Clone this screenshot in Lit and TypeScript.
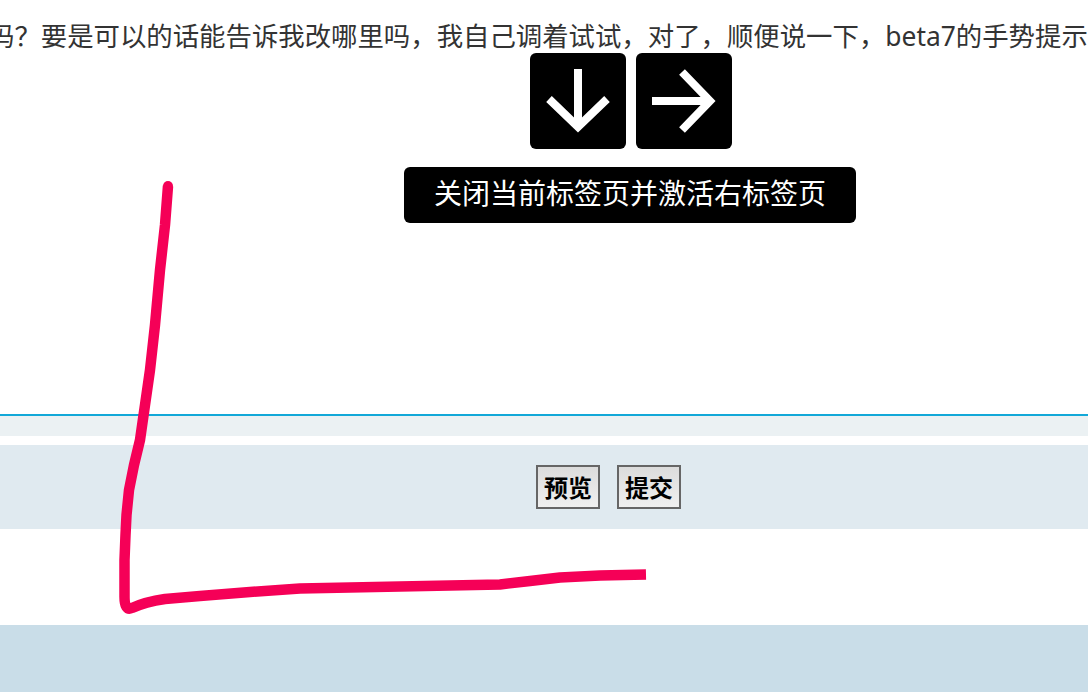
import { LitElement, html, css } from "lit";
import { customElement } from "lit/decorators.js";

@customElement("app-root")
export class AppRoot extends LitElement {
  static styles = css`
    :host {
      display: block;
      position: relative;
      width: 1088px;
      height: 692px;
      overflow: hidden;
      background: #fff;
      font-family: "Noto Sans", "Noto Sans CJK SC", sans-serif;
    }
    .page {
      display: flex;
      flex-direction: column;
      height: 100%;
    }
    .message {
      display: flex;
      height: 53px;
      padding-top: 18px;
      box-sizing: border-box;
      font-size: 26.4px;
      line-height: 36px;
      color: #333;
      white-space: nowrap;
      overflow: hidden;
    }
    .message span {
      margin-left: -12px;
    }
    .hint {
      display: flex;
      flex-direction: column;
      align-items: center;
      gap: 18px;
      height: 361px;
      padding-left: 172px;
      box-sizing: border-box;
    }
    .keys {
      display: flex;
      gap: 10px;
      margin-left: 2px;
    }
    .key {
      width: 96px;
      height: 96px;
      background: #000;
      border-radius: 6px;
      display: block;
    }
    .label {
      width: 452px;
      height: 56px;
      padding-bottom: 6px;
      box-sizing: border-box;
      background: #000;
      color: #fff;
      border-radius: 6px;
      font-size: 28px;
      display: flex;
      align-items: center;
      justify-content: center;
    }
    .rule {
      height: 2px;
      background: #12a8d8;
    }
    .band-light {
      height: 20px;
      background: #ebf1f3;
    }
    .gap {
      height: 9px;
    }
    .actions {
      height: 84px;
      background: #e0eaf0;
      display: flex;
      align-items: center;
      justify-content: center;
      gap: 17px;
      padding-left: 129px;
      box-sizing: border-box;
    }
    button {
      width: 64px;
      height: 44px;
      padding: 1px 0 0;
      border: 2px solid #666;
      background: linear-gradient(#dcdcdc, #f0f0f0);
      color: #000;
      font: bold 24px "Noto Sans", "Noto Sans CJK SC", sans-serif;
      line-height: 1;
    }
    .blank {
      height: 96px;
    }
    .bottom {
      flex: 1;
      background: #c9dde8;
    }
    .stroke {
      position: absolute;
      inset: 0;
      width: 1088px;
      height: 692px;
      pointer-events: none;
    }
  `;

  render() {
    return html`
      <div class="page">
        <div class="message">
          <span>吗？要是可以的话能告诉我改哪里吗，我自己调着试试，对了，顺便说一下，beta7的手势提示</span>
        </div>
        <div class="hint">
          <div class="keys">
            <svg class="key" viewBox="0 0 96 96" fill="none" stroke="#fff" stroke-width="8">
              <path d="M48 16V74" />
              <path d="M19 46L48 74L77 46" />
            </svg>
            <svg class="key" viewBox="0 0 96 96" fill="none" stroke="#fff" stroke-width="8">
              <path d="M16 48H74" />
              <path d="M46 19L74 48L46 77" />
            </svg>
          </div>
          <div class="label">关闭当前标签页并激活右标签页</div>
        </div>
        <div class="rule"></div>
        <div class="band-light"></div>
        <div class="gap"></div>
        <div class="actions">
          <button>预览</button>
          <button>提交</button>
        </div>
        <div class="blank"></div>
        <div class="bottom"></div>
      </div>
      <svg class="stroke" viewBox="0 0 1088 692" fill="none">
        <circle cx="168" cy="186" r="5" fill="#f50057" />
        <path
          d="M168 186L165 225L160 270L155 325L150 370L145 405L140 440L134 465L129 490L126.5 515L125.5 535L124.5 560L124.5 597Q124.5 611 132 608Q145 602 165 599L200 596L250 592L300 588.5L400 586.5L500 584.5L530 581L560 577.5L600 575.5L646 574.5"
          stroke="#f50057"
          stroke-width="10.5"
          stroke-linejoin="round"
        />
      </svg>
    `;
  }
}
